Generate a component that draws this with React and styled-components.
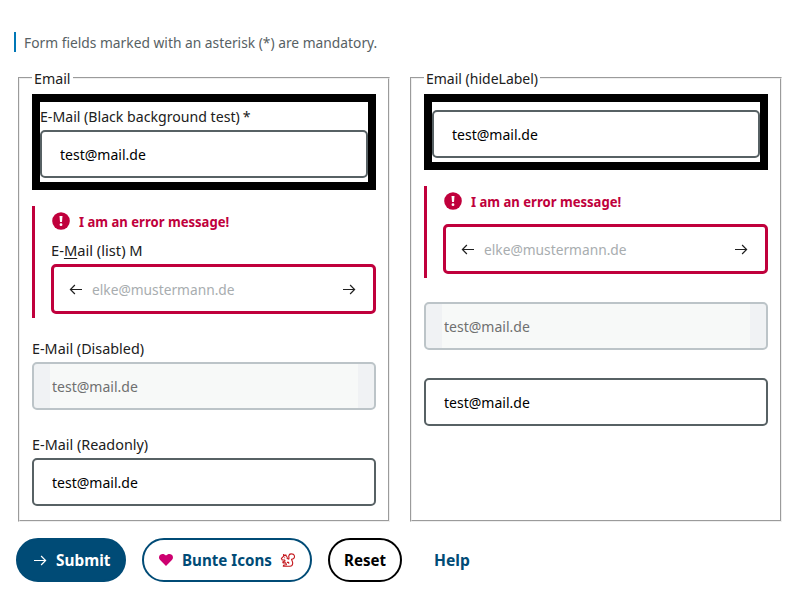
import React, { useLayoutEffect, useRef, useState } from 'react';
import styled, { createGlobalStyle } from 'styled-components';

const Global = createGlobalStyle`
  *, *::before, *::after { box-sizing: border-box; }
  body {
    margin: 0;
    background: #fff;
    color: #202020;
    font: 400 15px/20px "Noto Sans", sans-serif;
  }
`;

const FitBox = styled.span`
  display: inline-block;
  flex: none;
  width: ${p => p.$width}px;
  white-space: nowrap;
`;

const FitInner = styled.span`
  display: inline-block;
  transform-origin: 0 50%;
`;

/* Condenses a line of text to a given width. */
function Fit({ width, children }) {
  const ref = useRef(null);
  const [scale, setScale] = useState(1);
  useLayoutEffect(() => {
    setScale(width / ref.current.offsetWidth);
  }, [width]);
  return (
    <FitBox $width={width}>
      <FitInner ref={ref} style={{ transform: `scaleX(${scale})` }}>{children}</FitInner>
    </FitBox>
  );
}

const Page = styled.form`
  width: 800px;
  height: 598px;
  padding: 32px 18px 0 14px;
  overflow: hidden;
`;

const Note = styled.p`
  margin: 0;
  height: 20px;
  padding-left: 8px;
  border-left: 2px solid #0077b6;
  color: #576164;
  line-height: 21px;
`;

const Columns = styled.div`
  display: grid;
  grid-template-columns: 372px 372px;
  gap: 20px;
  margin: 16px 0 0 4px;
  height: 454px;
`;

const Group = styled.fieldset`
  margin: 0;
  min-width: 0;
  padding: 6px 12px 0;
`;

const Legend = styled.legend`
  padding: 0 2px;
  height: 20px;
  line-height: 21px;
`;

const Stack = styled.div`
  display: flex;
  flex-direction: column;
`;

const BlackFrame = styled.div`
  border: 8px solid #000;
  padding: ${p => (p.$compact ? '8px' : '4px')} 0 4px;
`;

const Field = styled.div`
  margin-top: ${p => p.$gap}px;
`;

const Label = styled.label`
  display: block;
  height: 24px;
  line-height: 21px;

  u { text-underline-offset: 2px; text-decoration-thickness: 1px; }
`;

const Asterisk = styled.span`
  margin-left: 3px;
`;

const ErrorBlock = styled.div`
  margin-top: 16px;
  padding: 5px 0 4px 16px;
  border-left: 3px solid #c0003c;
`;

const ErrorMessage = styled.div`
  display: flex;
  align-items: center;
  gap: 9px;
  height: 20px;
  margin-bottom: ${p => p.$gap}px;
  padding-left: 1px;
  color: #c0003c;
  font-weight: 700;
`;

const variants = {
  normal: { border: '2px solid #576164', height: 48, color: '#000' },
  disabled: { border: '2px solid #bcc4c8', height: 48, color: '#6f7070' },
  error: { border: '3px solid #c0003c', height: 50, color: '#a8adaf' },
};

const Control = styled.div`
  display: flex;
  align-items: center;
  height: ${p => variants[p.$kind].height}px;
  padding: 0 ${p => (p.$kind === 'error' ? '17px 0 15px' : '16px')};
  border: ${p => variants[p.$kind].border};
  border-radius: 5px;
  background: ${p => (p.$kind === 'disabled' ? '#f0f2f4' : '#fff')};
  color: ${p => variants[p.$kind].color};
`;

const Value = styled.div`
  display: flex;
  align-items: center;
  flex: 1;
  align-self: stretch;
  padding: 0 2px 1px;
  background: ${p => (p.$muted ? '#f7f9f8' : 'transparent')};
`;

const Placeholder = styled.div`
  flex: 1;
  padding: 0 0 1px 9px;
`;

const ArrowSvg = styled.svg`
  display: block;
  flex: none;
`;

const Actions = styled.div`
  display: flex;
  gap: 16px;
  margin: 16px 0 0 2px;
`;

const tones = {
  primary: { bg: '#004b76', fg: '#fff', line: '#004b76' },
  secondary: { bg: '#fff', fg: '#004b76', line: '#004b76' },
  normal: { bg: '#fff', fg: '#000', line: '#000' },
  ghost: { bg: 'transparent', fg: '#004b76', line: 'transparent' },
};

const Button = styled.button`
  display: flex;
  align-items: center;
  gap: ${p => p.$gap ?? 8}px;
  width: ${p => p.$width}px;
  height: 44px;
  padding: 0 0 0 ${p => p.$inset ?? 14}px;
  border: 2px solid ${p => tones[p.$tone].line};
  border-radius: 22px;
  background: ${p => tones[p.$tone].bg};
  color: ${p => tones[p.$tone].fg};
  font: 700 16.5px/24px "Noto Sans", sans-serif;
`;

const Arrow = ({ left }) => (
  <ArrowSvg width="14" height="14" viewBox="0 0 14 14" fill="none" stroke="currentColor" strokeWidth="1.2">
    <path d={left ? 'M13 7.5H1.4M5.9 3 1.4 7.500 5.900 12' : 'M1 7.500h11.600M8.100 3l4.500 4.500L8.100 12'} />
  </ArrowSvg>
);

const DarkArrow = styled.span`
  color: #202020;
`;

const Alert = () => (
  <ArrowSvg width="18" height="18" viewBox="0 0 18 18">
    <circle cx="9" cy="9" r="8.8" fill="#c0003c" />
    <path d="M7.500 4h3l-.5 6H8z" fill="#fff" />
    <circle cx="9" cy="12.700" r="1.400" fill="#fff" />
  </ArrowSvg>
);

const Heart = () => (
  <ArrowSvg width="16" height="16" viewBox="0 0 16 16" fill="#cd0070">
    <path d="M8 14.100 2.100 8.100C.5 6.400.7 3.900 2.300 2.700 4 1.400 6.400 1.700 8 3.500 9.600 1.700 12 1.400 13.700 2.700 15.300 3.900 15.500 6.400 13.900 8.100Z" />
  </ArrowSvg>
);

const Squirrel = () => (
  <ArrowSvg width="16" height="16" viewBox="0 0 16 16" fill="none" stroke="#c4161c" strokeWidth="1.1" strokeLinejoin="round">
    <path d="M3.700 4.200 3.500 2.500 5 3.700 5.800 2.800 6.400 4.100C7.300 4.700 7.400 5.600 7.200 6.500L8.700 7.100C9.600 6 8.500 5.200 8.800 3.900 9.100 2.500 10.300 1.700 11.600 1.900 13.600 2 14.700 3.300 14.500 5 14.300 6.600 13.200 7.100 11.500 7.200 11.800 8.700 12.900 9.800 12.700 11.500 12.500 13.100 11.500 14.200 10 14.200H3.300C3.300 13.100 4.200 12.600 6.400 12.700L5.800 10.900H3.200L2.700 9.900 5 9.100 4.800 8H2.200L1.400 6.400Z" />
    <path d="M7 10.400h1.700v1.300M4.300 5.800h.8" />
  </ArrowSvg>
);

const Email = ({ kind = 'normal' }) => (
  <Control $kind={kind}>
    <Value $muted={kind === 'disabled'}><Fit width={86}>test@mail.de</Fit></Value>
  </Control>
);

const ErrorEmail = () => (
  <Control $kind="error">
    <DarkArrow><Arrow left /></DarkArrow>
    <Placeholder><Fit width={143}>elke@mustermann.de</Fit></Placeholder>
    <DarkArrow><Arrow /></DarkArrow>
  </Control>
);

const ErrorText = ({ gap }) => (
  <ErrorMessage $gap={gap}><Alert /><Fit width={150}>I am an error message!</Fit></ErrorMessage>
);

export default function App() {
  return (
    <>
      <Global />
      <Page>
        <Note><Fit width={353}>Form fields marked with an asterisk (*) are mandatory.</Fit></Note>
        <Columns>
          <Group>
            <Legend><Fit width={37}>Email</Fit></Legend>
            <Stack>
              <BlackFrame>
                <Label><Fit width={210}>E-Mail (Black background test)<Asterisk>*</Asterisk></Fit></Label>
                <Email />
              </BlackFrame>
              <ErrorBlock>
                <ErrorText gap={9} />
                <Label><Fit width={92}>E-<u>M</u>ail (list) M</Fit></Label>
                <ErrorEmail />
              </ErrorBlock>
              <Field $gap={20}>
                <Label><Fit width={112}>E-Mail (Disabled)</Fit></Label>
                <Email kind="disabled" />
              </Field>
              <Field $gap={24}>
                <Label><Fit width={116}>E-Mail (Readonly)</Fit></Label>
                <Email />
              </Field>
            </Stack>
          </Group>
          <Group>
            <Legend><Fit width={112}>Email (hideLabel)</Fit></Legend>
            <Stack>
              <BlackFrame $compact><Email /></BlackFrame>
              <ErrorBlock>
                <ErrorText gap={13} />
                <ErrorEmail />
              </ErrorBlock>
              <Field $gap={24}><Email kind="disabled" /></Field>
              <Field $gap={28}><Email /></Field>
            </Stack>
          </Group>
        </Columns>
        <Actions>
          <Button type="button" $tone="primary" $width={110} $inset={15} $gap={9}><Arrow /><Fit width={54}>Submit</Fit></Button>
          <Button type="button" $tone="secondary" $width={170}><Heart /><Fit width={90}>Bunte Icons</Fit><Squirrel /></Button>
          <Button type="button" $tone="normal" $width={74}><Fit width={42}>Reset</Fit></Button>
          <Button type="button" $tone="ghost" $width={68}><Fit width={36}>Help</Fit></Button>
        </Actions>
      </Page>
    </>
  );
}
